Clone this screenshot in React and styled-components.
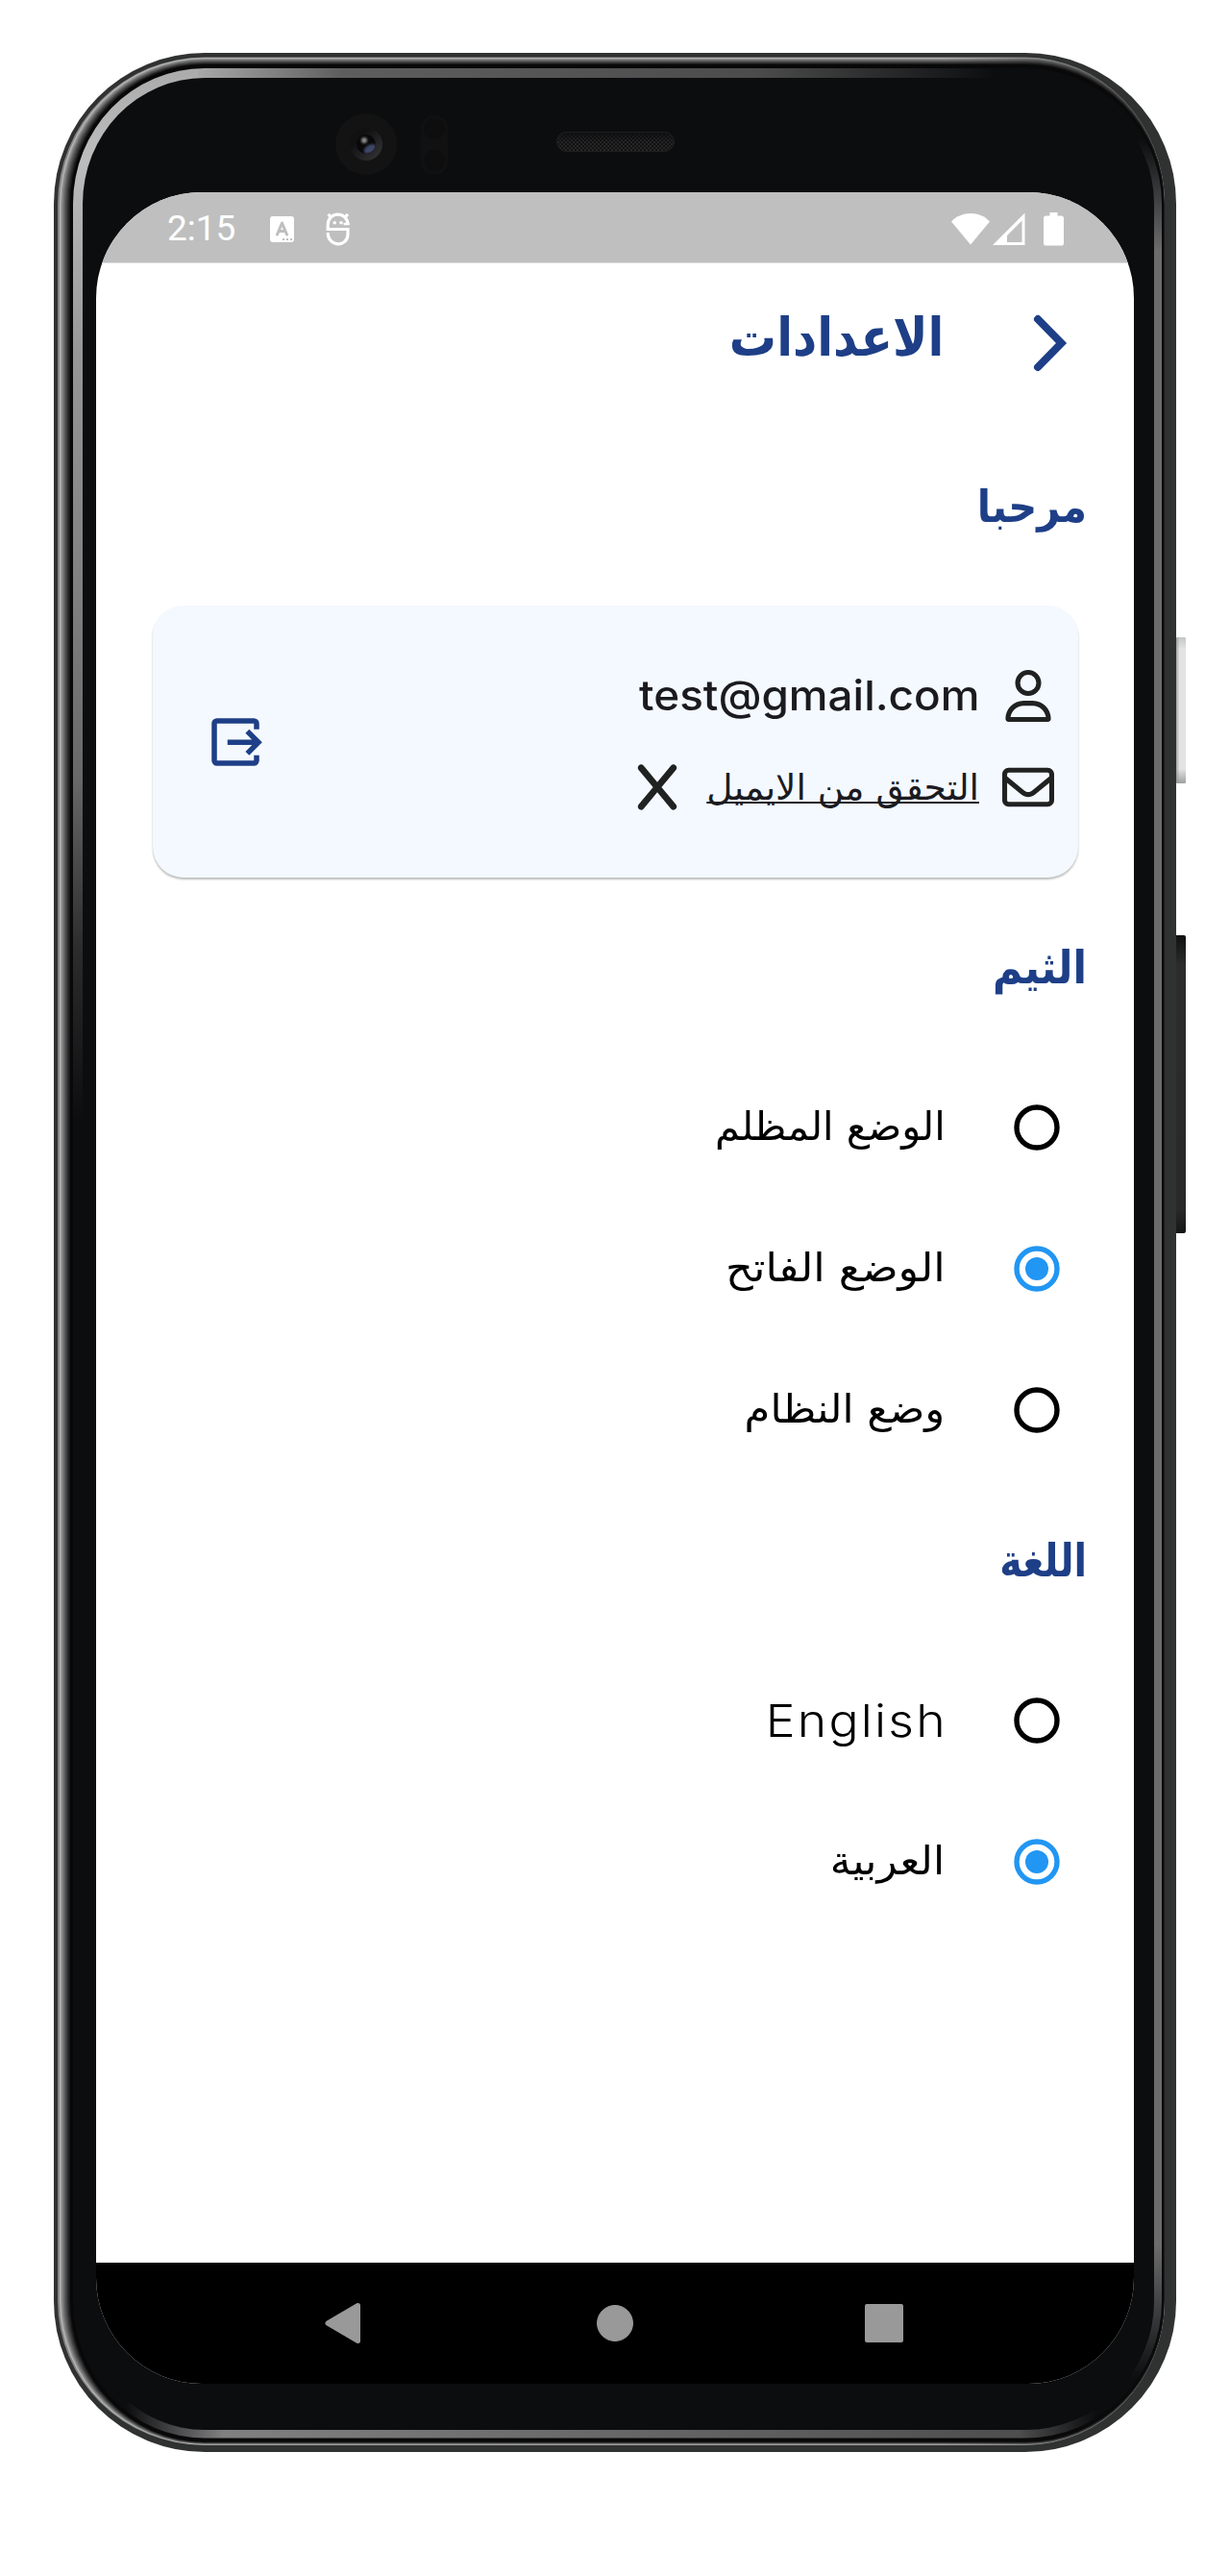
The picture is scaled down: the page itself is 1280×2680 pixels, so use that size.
import React from "react";
import styled, { createGlobalStyle } from "styled-components";
import { FaRegUser, FaRegEnvelope, FaX } from "react-icons/fa6";

const navy = "#1e3f87";
const ink = "#1b1b1f";

const GlobalStyle = createGlobalStyle`
  body {
    margin: 0;
    background: #ffffff;
  }
`;

const Stage = styled.main`
  box-sizing: border-box;
  width: 1280px;
  height: 2680px;
  padding: 55px 0 0 56px;
  overflow: hidden;
`;

const Device = styled.div`
  position: relative;
  box-sizing: border-box;
  width: 1168px;
  height: 2496px;
  padding: 145px 44px 71px;
`;

const FrameArt = styled.svg`
  position: absolute;
  top: 0;
  left: 0;
  width: 1178px;
  height: 2496px;
`;

const Screen = styled.div`
  position: relative;
  display: flex;
  flex-direction: column;
  height: 2280px;
  border-radius: 110px;
  overflow: hidden;
  background: #ffffff;
  font-family: "DejaVu Sans", sans-serif;
`;

const StatusBar = styled.header`
  display: flex;
  align-items: center;
  justify-content: space-between;
  box-sizing: border-box;
  height: 74px;
  flex: none;
  padding: 3px 73px 0 73px;
  background: #bfbfbf;
  border-bottom: 1px solid #dedede;
  color: #ffffff;
`;

const StatusGroup = styled.div`
  display: flex;
  align-items: center;
`;

const Clock = styled.span`
  width: 107px;
  padding-left: 1px;
  font: 400 37px/44px Roboto, sans-serif;
`;

const StatusIcon = styled.svg`
  display: block;
  width: ${(p) => p.$w}px;
  height: 36px;
  margin-right: ${(p) => p.$gap || 0}px;
  fill: currentColor;
`;

const Content = styled.div`
  flex: 1;
  display: flex;
  flex-direction: column;
  direction: rtl;
`;

const AppBar = styled.div`
  display: flex;
  align-items: center;
  gap: 84px;
  height: 153px;
  padding-right: 60px;
`;

const BackIcon = styled.svg`
  width: 54px;
  height: 60px;
  margin-top: 13px;
  fill: none;
  stroke: ${navy};
  stroke-width: 8;
  stroke-linecap: round;
  stroke-linejoin: miter;
`;

const Title = styled.h1`
  margin: 0;
  color: ${navy};
  font-size: 55px;
  font-weight: 700;
  line-height: 70px;
  transform: scaleX(0.893);
  transform-origin: right;
`;

const SectionTitle = styled.h2`
  margin: ${(p) => p.$top}px 49px ${(p) => p.$bottom}px 0;
  color: ${navy};
  font-size: ${(p) => p.$size || 47}px;
  font-weight: 700;
  line-height: 60px;
  transform: scaleX(${(p) => p.$stretch});
  transform-origin: right;
`;

const AccountCard = styled.section`
  display: flex;
  align-items: center;
  justify-content: space-between;
  box-sizing: border-box;
  height: 283px;
  margin: 0 58px 0 59px;
  padding: 0 25px 0 53px;
  border-radius: 32px;
  background: #f4f9ff;
  box-shadow: 0 2px 2px rgba(0, 0, 0, 0.2), 0 2px 3px rgba(0, 0, 0, 0.08);
`;

const AccountRows = styled.div`
  display: flex;
  flex-direction: column;
`;

const AccountRow = styled.div`
  display: flex;
  align-items: center;
  gap: 24px;
  height: 94.5px;
  color: ${ink};

  svg {
    flex: none;
    font-size: 54px;
    color: #202222;
  }
`;

const Email = styled.span`
  direction: ltr;
  margin-top: -3px;
  font: 500 43px/60px Inter, sans-serif;
  transform: scaleX(1.066);
  transform-origin: right;
`;

const VerifyLink = styled.a`
  font-size: 37.5px;
  line-height: 60px;
  text-decoration: underline;
  text-decoration-thickness: 2px;
  text-decoration-skip-ink: none;
  text-underline-offset: 2px;
`;

const LogoutIcon = styled.svg`
  width: 66px;
  height: 66px;
  fill: none;
  stroke: ${navy};
  stroke-width: 2;
`;

const OptionList = styled.div`
  display: flex;
  flex-direction: column;
`;

const Option = styled.label`
  display: flex;
  align-items: center;
  gap: 71.5px;
  height: 147px;
  padding-right: 77px;
  color: #000000;
`;

const RadioMark = styled.svg`
  flex: none;
  width: 48px;
  height: 48px;
  color: ${(p) => (p.$on ? "#2196f3" : "#000000")};
`;

const OptionText = styled.span`
  margin-top: -2px;
  font-size: 41px;
  line-height: 60px;
  transform: scaleX(${(p) => p.$stretch});
  transform-origin: right;
`;

const LatinOptionText = styled.span`
  direction: ltr;
  margin-right: -2px;
  font: 300 47px/60px Inter, sans-serif;
  letter-spacing: 2px;
  transform: scaleX(1.1);
  transform-origin: right;
`;

const NavBar = styled.nav`
  display: flex;
  align-items: center;
  justify-content: space-between;
  box-sizing: border-box;
  flex: none;
  height: 126px;
  padding: 0 240px 0 236px;
  background: #000000;
`;

const NavIcon = styled.svg`
  width: ${(p) => p.$w}px;
  height: 44px;
  fill: #999999;
  stroke: #999999;
  stroke-linejoin: round;
`;

function frameShape(l, t, r, b) {
  const cx1 = 157;
  const cx2 = 1011;
  const cy1 = 157;
  const cy2 = 2339;
  const arc = (rx, ry, x, y) => `A${rx} ${ry} 0 0 1 ${x} ${y}`;
  return [
    `M${cx1} ${t}H${cx2}`,
    arc(r - cx2, cy1 - t, r, cy1),
    `V${cy2}`,
    arc(r - cx2, b - cy2, cx2, b),
    `H${cx1}`,
    arc(cx1 - l, b - cy2, l, cy2),
    `V${cy1}`,
    arc(cx1 - l, cy1 - t, cx1, t),
    "Z",
  ].join("");
}

const rimSteps = Array.from({ length: 10 }, (_, i) => {
  const t = i / 9;
  const g = Math.round(184 - 176 * Math.pow(t, 0.8));
  return {
    d: frameShape(6 + 11 * t, 5 + 7 * t, 1156 - t, 2488.5 - 3 * t),
    fill: `rgb(${g},${g},${g})`,
  };
});

function PhoneFrame() {
  return (
    <FrameArt viewBox="0 0 1178 2496" aria-hidden="true">
      <defs>
        <linearGradient id="rim" x1="0" x2="1">
          <stop offset="0" stopColor="#858585" />
          <stop offset="0.85" stopColor="#8a8a8a" />
          <stop offset="0.97" stopColor="#3a3a3a" />
          <stop offset="1" stopColor="#141414" />
        </linearGradient>
        <linearGradient id="rimShade" x1="0" x2="1">
          <stop offset="0.8" stopColor="#0b0b0c" stopOpacity="0" />
          <stop offset="1" stopColor="#0b0b0c" stopOpacity="0.7" />
        </linearGradient>
        <linearGradient id="bandLeft" x1="0" y1="0" x2="0" y2="1">
          <stop offset="0" stopColor="#a8a8a8" />
          <stop offset="0.1" stopColor="#bdbdbd" />
          <stop offset="0.28" stopColor="#979797" />
          <stop offset="0.5" stopColor="#808080" />
          <stop offset="0.68" stopColor="#686868" />
          <stop offset="0.84" stopColor="#2c2c2d" />
          <stop offset="1" stopColor="#0c0d0f" />
        </linearGradient>
        <linearGradient id="bandTop" x1="0" x2="1">
          <stop offset="0" stopColor="#a8a8a8" />
          <stop offset="0.18" stopColor="#5e5e5e" />
          <stop offset="0.7" stopColor="#4c4c4c" />
          <stop offset="1" stopColor="#0c0d0f" />
        </linearGradient>
        <linearGradient id="bandRight" x1="0" y1="0" x2="0" y2="1">
          <stop offset="0" stopColor="#0c0d0f" />
          <stop offset="0.05" stopColor="#6c6c6d" />
          <stop offset="0.94" stopColor="#6c6c6d" />
          <stop offset="1" stopColor="#0c0d0f" />
        </linearGradient>
        <linearGradient id="bandBottom" x1="0" x2="1">
          <stop offset="0" stopColor="#0c0d0f" />
          <stop offset="0.1" stopColor="#808081" />
          <stop offset="0.92" stopColor="#4e4e4e" />
          <stop offset="1" stopColor="#0c0d0f" />
        </linearGradient>
        <linearGradient id="lightKey" x1="0" x2="1">
          <stop offset="0" stopColor="#a5a5a5" />
          <stop offset="0.35" stopColor="#e3e3e3" />
          <stop offset="1" stopColor="#e3e3e3" />
        </linearGradient>
        <linearGradient id="keyEnds" x1="0" y1="0" x2="0" y2="1">
          <stop offset="0" stopColor="#8f8f8f" stopOpacity="0.35" />
          <stop offset="0.08" stopColor="#8f8f8f" stopOpacity="0" />
          <stop offset="0.9" stopColor="#8f8f8f" stopOpacity="0" />
          <stop offset="1" stopColor="#8f8f8f" stopOpacity="0.8" />
        </linearGradient>
        <linearGradient id="darkKey" x1="0" y1="0" x2="0" y2="1">
          <stop offset="0" stopColor="#111111" />
          <stop offset="0.1" stopColor="#2c2c2c" />
          <stop offset="0.92" stopColor="#292929" />
          <stop offset="1" stopColor="#161616" />
        </linearGradient>
        <linearGradient id="lensRing" x1="0" y1="0" x2="1" y2="1">
          <stop offset="0.3" stopColor="#111112" />
          <stop offset="1" stopColor="#38383b" />
        </linearGradient>
        <linearGradient id="grille" x1="0" y1="0" x2="0" y2="1">
          <stop offset="0" stopColor="#0c0d0f" stopOpacity="0.8" />
          <stop offset="0.5" stopColor="#0c0d0f" stopOpacity="0.1" />
          <stop offset="1" stopColor="#0c0d0f" stopOpacity="0" />
        </linearGradient>
        <pattern id="mesh" width="4" height="4" patternUnits="userSpaceOnUse">
          <rect width="4" height="4" fill="#111112" />
          <rect width="2" height="2" fill="#282828" />
          <rect x="2" y="2" width="2" height="2" fill="#282828" />
        </pattern>
        <filter id="soft" x="-50%" y="-50%" width="200%" height="200%">
          <feGaussianBlur stdDeviation="1.2" />
        </filter>
        <clipPath id="bandClip">
          <path d={frameShape(20, 16, 1153, 2481.5)} />
        </clipPath>
        <clipPath id="lensClip">
          <circle cx="325" cy="95" r="10" />
        </clipPath>
      </defs>

      <rect x="1158" y="603.5" width="20" height="152" rx="1.500" transform="translate(0 4.500)" fill="#e3e3e3" />
      <rect x="1168" y="608" width="10" height="152" rx="1.500" fill="url(#lightKey)" />
      <rect x="1168" y="608" width="10" height="152" rx="1.500" fill="url(#keyEnds)" />
      <rect x="1160" y="918" width="18" height="310" rx="2" fill="url(#darkKey)" />

      <path d={frameShape(0, 0, 1168, 2496)} fill="#303131" />
      <path d={frameShape(4, 4.5, 1156, 2489)} fill="url(#rim)" />
      {rimSteps.map((s) => (
        <path key={s.d} d={s.d} fill={s.fill} />
      ))}
      <path d={frameShape(5, 5, 1156, 2488.5)} fill="url(#rimShade)" />

      <g clipPath="url(#bandClip)">
        <rect width="1168" height="2496" fill="#0c0d0f" />
        <rect x="0" y="0" width="150" height="1110" fill="url(#bandLeft)" />
        <rect x="150" y="0" width="830" height="100" fill="url(#bandTop)" />
        <rect x="1080" y="90" width="88" height="2330" fill="url(#bandRight)" />
        <rect x="75" y="2380" width="1010" height="116" fill="url(#bandBottom)" />
      </g>
      <path d={frameShape(30, 26, 1145, 2473)} fill="#0c0d0f" />

      <circle cx="325" cy="95" r="32" fill="#131313" />
      <circle cx="325" cy="95" r="17" fill="url(#lensRing)" />
      <circle cx="325" cy="95" r="10" fill="#09090b" />
      <g clipPath="url(#lensClip)" filter="url(#soft)">
        <ellipse cx="329" cy="100" rx="7" ry="4" fill="#3c4668" transform="rotate(-30 329 100)" />
        <circle cx="323" cy="91" r="3" fill="#8b8b8b" />
      </g>

      <rect x="382" y="65" width="28" height="62" rx="14" fill="#111112" />
      <circle cx="396" cy="79" r="11" fill="#0e0e0f" />
      <circle cx="396" cy="112" r="11" fill="#0e0e0f" />

      <rect x="523.5" y="82.5" width="122" height="20" rx="10" fill="url(#mesh)" stroke="#1f1f20" />
      <rect x="524" y="83" width="121" height="19" rx="9.5" fill="url(#grille)" />
    </FrameArt>
  );
}

function Radio({ on }) {
  return (
    <RadioMark viewBox="0 0 48 48" $on={on}>
      <circle cx="24" cy="24" r="21" fill="none" stroke="currentColor" strokeWidth="5.4" />
      {on && <circle cx="24" cy="24" r="12" fill="currentColor" />}
    </RadioMark>
  );
}

const themes = [
  { label: "الوضع المظلم", stretch: 1.013, on: false },
  { label: "الوضع الفاتح", stretch: 1.09, on: true },
  { label: "وضع النظام", stretch: 1.058, on: false },
];

export default function App() {
  return (
    <>
      <GlobalStyle />
      <Stage>
        <Device>
          <PhoneFrame />
          <Screen>
            <StatusBar>
              <StatusGroup>
                <Clock>2:15</Clock>
                <StatusIcon $w={26} $gap={32} viewBox="0 0 26 36">
                  <path d="M3 5H22Q25 5 25 8V29Q25 32 22 32H3Q0 32 0 29V8Q0 5 3 5Z" />
                  <path
                    d="M7.5 24L12.500 12L17.500 24M9.500 20.500H15.500"
                    fill="none"
                    stroke="#bfbfbf"
                    strokeWidth="3"
                    strokeLinecap="round"
                    strokeLinejoin="round"
                  />
                  <path d="M13 29H15M17 29H19M21 29H23" stroke="#bfbfbf" strokeWidth="2" />
                </StatusIcon>
                <StatusIcon $w={26} viewBox="0 0 26 36">
                  <g fill="none" stroke="currentColor" strokeWidth="3.200">
                    <path d="M23 14C23 -0.500 2.200 -0.500 2.200 14V18.500H23V23.500C23 37.500 2.200 37.500 2.200 22" />
                    <path d="M5.500 6L2.500 2.800M20 6L23 2.800" />
                    <path d="M24.500 13H18.500" strokeWidth="2.600" />
                  </g>
                  <circle cx="9.300" cy="11.800" r="1.800" />
                  <circle cx="16" cy="11.800" r="1.800" />
                </StatusIcon>
              </StatusGroup>
              <StatusGroup>
                <StatusIcon $w={40} $gap={3} viewBox="0 0 40 36">
                  <path d="M20 34.500L0 10.500C10.500 -1 29.500 -1 40 10.500Z" />
                </StatusIcon>
                <StatusIcon $w={34} $gap={19} viewBox="0 0 34 36">
                  <path fillRule="evenodd" d="M33.500 1.500V35H0ZM30.500 9.500L15 25V32H30.500Z" />
                </StatusIcon>
                <StatusIcon $w={21} viewBox="0 0 21 36">
                  <path d="M6.500 1H14.500V4.500H18.500Q21 4.500 21 7V33Q21 35.500 18.500 35.500H2.500Q0 35.500 0 33V7Q0 4.500 2.500 4.500H6.500Z" />
                </StatusIcon>
              </StatusGroup>
            </StatusBar>

            <Content>
              <AppBar>
                <BackIcon viewBox="0 0 54 60">
                  <path d="M14 5L38.500 30L14 55" />
                </BackIcon>
                <Title>الاعدادات</Title>
              </AppBar>

              <SectionTitle $top={70} $bottom={73} $size={46} $stretch={0.905}>
                مرحبا
              </SectionTitle>

              <AccountCard>
                <AccountRows>
                  <AccountRow>
                    <FaRegUser />
                    <Email>test@gmail.com</Email>
                  </AccountRow>
                  <AccountRow>
                    <FaRegEnvelope />
                    <VerifyLink>التحقق من الايميل</VerifyLink>
                    <FaX />
                  </AccountRow>
                </AccountRows>
                <LogoutIcon viewBox="0 0 24 24">
                  <path d="M20 7.200V5a1 1 0 0 0-1-1H5a1 1 0 0 0-1 1V19a1 1 0 0 0 1 1H19a1 1 0 0 0 1-1V17" />
                  <path d="M9 12.100H20M16.500 7.900L20.700 12.100L16.500 16.300" />
                </LogoutIcon>
              </AccountCard>

              <SectionTitle $top={64} $bottom={62.5} $stretch={0.9}>
                الثيم
              </SectionTitle>
              <OptionList>
                {themes.map((t) => (
                  <Option key={t.label}>
                    <Radio on={t.on} />
                    <OptionText $stretch={t.stretch}>{t.label}</OptionText>
                  </Option>
                ))}
              </OptionList>

              <SectionTitle $top={53.5} $bottom={62.5} $stretch={0.84}>
                اللغة
              </SectionTitle>
              <OptionList>
                <Option>
                  <Radio />
                  <LatinOptionText>English</LatinOptionText>
                </Option>
                <Option>
                  <Radio on />
                  <OptionText $stretch={1.065}>العربية</OptionText>
                </Option>
              </OptionList>
            </Content>

            <NavBar>
              <NavIcon $w={44} viewBox="0 0 44 44">
                <path d="M5 22L36.500 3.500V40.500Z" strokeWidth="5" />
              </NavIcon>
              <NavIcon $w={40} viewBox="0 0 40 44">
                <circle cx="20" cy="22" r="18.500" />
              </NavIcon>
              <NavIcon $w={40} viewBox="0 0 40 44">
                <rect x="2" y="4" width="36" height="36" strokeWidth="4" />
              </NavIcon>
            </NavBar>
          </Screen>
        </Device>
      </Stage>
    </>
  );
}
